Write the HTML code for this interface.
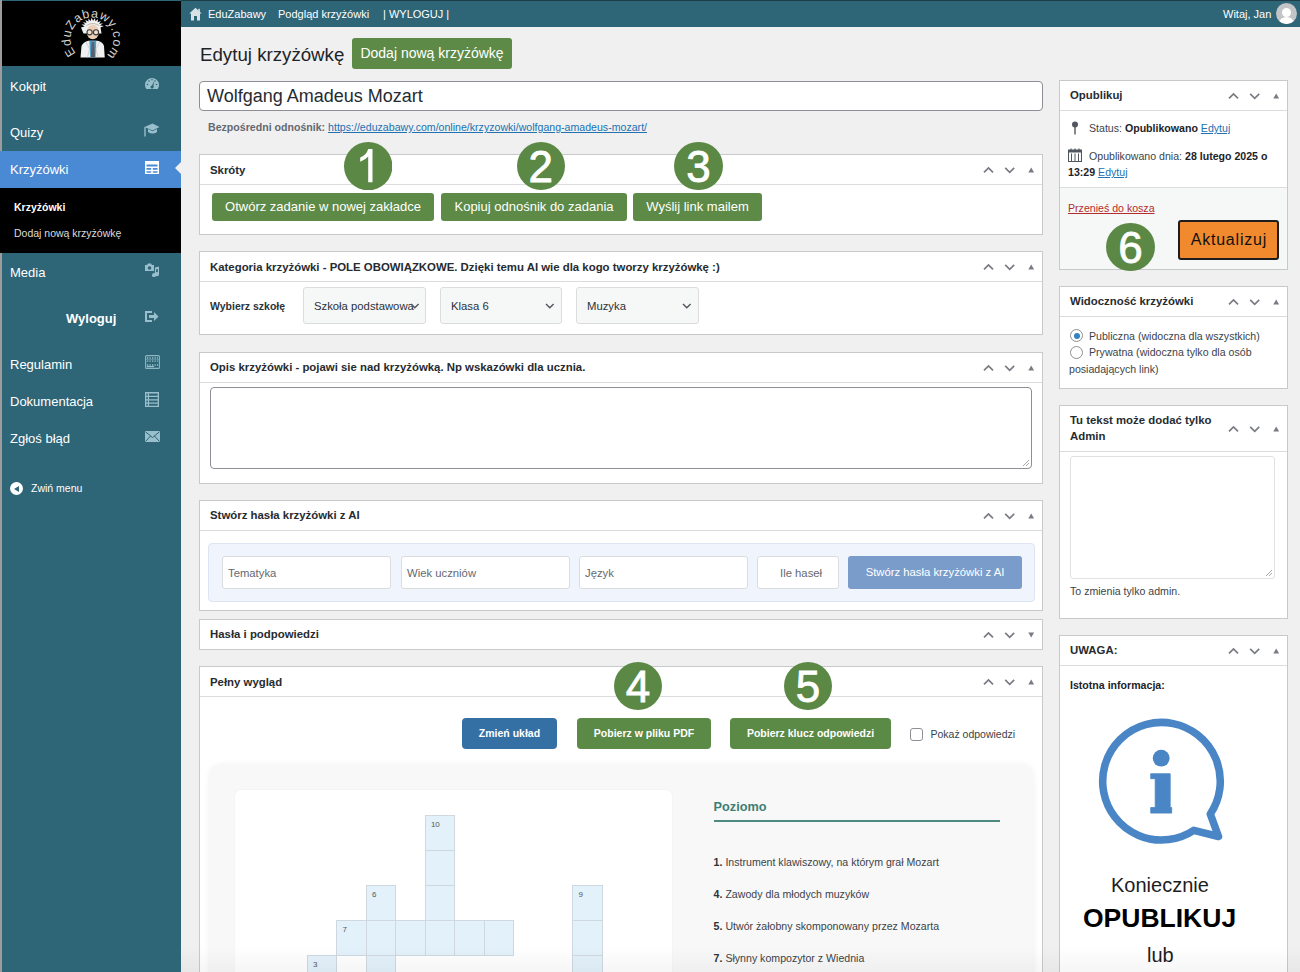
<!DOCTYPE html>
<html><head><meta charset="utf-8">
<style>
*{box-sizing:border-box;margin:0;padding:0}
html,body{width:1300px;height:972px;overflow:hidden;background:#f0f0f1;font-family:"Liberation Sans",sans-serif;color:#1d2327}
.a{position:absolute}
.t{position:absolute;white-space:nowrap;line-height:1}
#side{left:0;top:0;width:181px;height:972px;background:#2e6577}
#logo{left:2px;top:1px;width:179px;height:65px;background:#000}
.mi{position:absolute;left:10px;font-size:13px;color:#fff;white-space:nowrap;line-height:1}
.ic{position:absolute;left:144px}
#top{left:181px;top:0;width:1119px;height:27px;background:#2e6577;border-top:1px solid #1c3c46}
.tb{position:absolute;top:9px;font-size:11px;color:#fff;white-space:nowrap;line-height:1}
.box{position:absolute;background:#fff;border:1px solid #c8c9cb}
.bh{position:absolute;left:0;right:0;top:0;border-bottom:1px solid #dcdcde}
.bt{position:absolute;left:10px;font-size:11.4px;font-weight:bold;color:#262b30;white-space:nowrap;line-height:1}
.arr{position:absolute;width:60px;height:14px}
.gbtn{position:absolute;background:#5e8a47;border-radius:3px;color:#fff;font-size:13px;text-align:center;white-space:nowrap}
.circ{position:absolute;border-radius:50%;background:#5b8945;color:#fff;text-align:center;-webkit-text-stroke:0.8px #fff}
.sel{position:absolute;background:#f6f7f7;border:1px solid #dcdcde;border-radius:3px;font-size:11.5px;color:#2c3338;line-height:1}
.inp{position:absolute;background:#fff;border:1px solid #dcdcde;border-radius:3px;font-size:11px;color:#646970;line-height:1}
.cell{position:absolute;width:30px;height:36px;background:#e3f1fb;border:1px solid #cfd8de}
.cn{position:absolute;left:5px;top:5px;font-size:8px;color:#555;line-height:1}
.clue{position:absolute;left:713.6px;font-size:10.6px;color:#3c434a;white-space:nowrap;line-height:1}
.clue b{color:#2c3338}
</style></head><body>

<!-- SIDEBAR -->
<div id="side" class="a"></div>
<div class="a" style="left:0;top:0;width:2px;height:972px;background:#9c9c9c"></div>
<div id="logo" class="a"></div>
<div class="a" style="left:0;top:151px;width:181px;height:38px;background:#4a89d4"></div>
<div class="a" style="left:0;top:188px;width:181px;height:65px;background:#000"></div>
<div class="a" style="left:175px;top:161px;width:0;height:0;border-top:7px solid transparent;border-bottom:7px solid transparent;border-right:7px solid #f0f0f1"></div>

<div class="mi" style="top:80px">Kokpit</div>
<div class="mi" style="top:126px">Quizy</div>
<div class="mi" style="top:163px">Krzyżówki</div>
<div class="mi" style="left:14px;top:202px;font-size:10.5px;font-weight:bold">Krzyżówki</div>
<div class="mi" style="left:14px;top:228px;font-size:10.5px;color:#ddd">Dodaj nową krzyżówkę</div>
<div class="mi" style="top:266px">Media</div>
<div class="mi" style="left:66px;top:312px;font-weight:bold">Wyloguj</div>
<div class="mi" style="top:358px">Regulamin</div>
<div class="mi" style="top:395px">Dokumentacja</div>
<div class="mi" style="top:432px">Zgłoś błąd</div>
<div class="a" style="left:10px;top:482px;width:13px;height:13px;border-radius:50%;background:#fff"></div>
<div class="a" style="left:13px;top:485px;width:0;height:0;border-top:3.5px solid transparent;border-bottom:3.5px solid transparent;border-right:5px solid #2e6577;margin-left:1px;margin-top:0.5px"></div>
<div class="mi" style="left:31px;top:483px;font-size:10.5px">Zwiń menu</div>

<!-- TOPBAR -->
<div id="top" class="a"></div>
<div class="tb" style="left:208px">EduZabawy</div>
<div class="tb" style="left:278px">Podgląd krzyżówki</div>
<div class="tb" style="left:383px">| WYLOGUJ |</div>
<div class="tb" style="left:1223px">Witaj, Jan</div>
<div class="a" style="left:1276px;top:3px;width:21px;height:21px;border-radius:50%;background:#c3c4c7;overflow:hidden">
  <div class="a" style="left:6px;top:5px;width:9px;height:9px;border-radius:50%;background:#fff"></div>
  <div class="a" style="left:3px;top:14px;width:15px;height:12px;border-radius:50%;background:#fff"></div>
</div>

<!-- HEADING -->
<div class="t" style="left:200px;top:46px;font-size:18.7px;color:#1d2327">Edytuj krzyżówkę</div>
<div class="gbtn" style="left:352px;top:38px;width:160px;height:31px;line-height:31px;font-size:14px">Dodaj nową krzyżówkę</div>

<div class="a" style="left:199px;top:81px;width:844px;height:30px;background:#fff;border:1px solid #8c8f94;border-radius:4px"></div>
<div class="t" style="left:207px;top:87px;font-size:18px;color:#262b30">Wolfgang Amadeus Mozart</div>
<div class="t" style="left:208px;top:122px;font-size:10.6px;font-weight:bold;color:#646970">Bezpośredni odnośnik: <span style="font-weight:normal;color:#2271b1;text-decoration:underline">https://eduzabawy.com/online/krzyzowki/wolfgang-amadeus-mozart/</span></div>


<!-- ARROWS template: up, down, triangle -->
<!-- SKROTY -->
<div class="box" style="left:199px;top:154px;width:844px;height:81px">
  <div class="bh" style="height:30px"></div>
  <div class="bt" style="top:10px">Skróty</div>
</div>
<div class="gbtn" style="left:212px;top:193px;width:222px;height:28px;line-height:28px">Otwórz zadanie w nowej zakładce</div>
<div class="gbtn" style="left:441px;top:193px;width:186px;height:28px;line-height:28px">Kopiuj odnośnik do zadania</div>
<div class="gbtn" style="left:633px;top:193px;width:129px;height:28px;line-height:28px">Wyślij link mailem</div>

<!-- KATEGORIA -->
<div class="box" style="left:199px;top:251px;width:844px;height:84px">
  <div class="bh" style="height:30px"></div>
  <div class="bt" style="top:10px">Kategoria krzyżówki - POLE OBOWIĄZKOWE. Dzięki temu AI wie dla kogo tworzy krzyżówkę :)</div>
  <div class="t" style="left:10px;top:49px;font-size:10.5px;font-weight:bold;color:#2c3338">Wybierz szkołę</div>
</div>
<div class="sel" style="left:303px;top:287px;width:123px;height:37px"><span class="t" style="left:10px;top:13px;font-size:11.3px">Szkoła podstawowa</span></div>
<div class="sel" style="left:440px;top:287px;width:122px;height:37px"><span class="t" style="left:10px;top:13px;font-size:11.3px">Klasa 6</span></div>
<div class="sel" style="left:576px;top:287px;width:123px;height:37px"><span class="t" style="left:10px;top:13px;font-size:11.3px">Muzyka</span></div>

<!-- OPIS -->
<div class="box" style="left:199px;top:352px;width:844px;height:132px">
  <div class="bh" style="height:30px"></div>
  <div class="bt" style="top:9px">Opis krzyżówki - pojawi sie nad krzyżówką. Np wskazówki dla ucznia.</div>
</div>
<div class="a" style="left:210px;top:387px;width:822px;height:82px;border:1px solid #8c8f94;border-radius:4px;background:#fff"></div>

<!-- STWORZ -->
<div class="box" style="left:199px;top:500px;width:844px;height:111px">
  <div class="bh" style="height:30px"></div>
  <div class="bt" style="top:9px">Stwórz hasła krzyżówki z AI</div>
</div>
<div class="a" style="left:208px;top:543px;width:827px;height:59px;background:#f0f4fd;border:1px solid #dde4f2;border-radius:4px"></div>
<div class="inp" style="left:222px;top:556px;width:169px;height:33px"><span class="t" style="left:5px;top:11px;font-size:11.3px">Tematyka</span></div>
<div class="inp" style="left:401px;top:556px;width:169px;height:33px"><span class="t" style="left:5px;top:11px;font-size:11.3px">Wiek uczniów</span></div>
<div class="inp" style="left:579px;top:556px;width:169px;height:33px"><span class="t" style="left:5px;top:11px;font-size:11.3px">Język</span></div>
<div class="inp" style="left:757px;top:556px;width:82px;height:33px"><span class="t" style="left:22px;top:11px;font-size:11.3px">Ile haseł</span></div>
<div class="a" style="left:848px;top:556px;width:174px;height:33px;background:#7a9ccb;border-radius:3px;color:#fff;font-size:11.3px;text-align:center;line-height:33px">Stwórz hasła krzyżówki z AI</div>

<!-- HASLA -->
<div class="box" style="left:199px;top:619px;width:844px;height:31px">
  <div class="bt" style="top:9px">Hasła i podpowiedzi</div>
</div>

<!-- PELNY -->
<div class="box" style="left:199px;top:666px;width:844px;height:320px">
  <div class="bh" style="height:30px"></div>
  <div class="bt" style="top:10px">Pełny wygląd</div>
</div>
<div class="a" style="left:462px;top:718px;width:95px;height:31px;background:#3570a5;border-radius:4px;color:#fff;font-size:10.5px;font-weight:bold;text-align:center;line-height:31px">Zmień układ</div>
<div class="a" style="left:577px;top:718px;width:134px;height:31px;background:#5b8a46;border-radius:4px;color:#fff;font-size:10.5px;font-weight:bold;text-align:center;line-height:31px">Pobierz w pliku PDF</div>
<div class="a" style="left:730px;top:718px;width:161px;height:31px;background:#5b8a46;border-radius:4px;color:#fff;font-size:10.5px;font-weight:bold;text-align:center;line-height:31px">Pobierz klucz odpowiedzi</div>
<div class="a" style="left:910px;top:728px;width:13px;height:13px;border:1px solid #8c8f94;border-radius:3px;background:#fff"></div>
<div class="t" style="left:930.5px;top:729px;font-size:10.5px;color:#3c434a">Pokaż odpowiedzi</div>

<div class="a" style="left:210px;top:764px;width:823px;height:222px;background:#f8f8f8;border-radius:12px;box-shadow:0 1px 7px rgba(0,0,0,0.07)"></div>
<div class="a" style="left:235px;top:790px;width:437px;height:200px;background:#fff;border-radius:6px;box-shadow:0 0 2px rgba(0,0,0,0.05)"></div>


<!-- RIGHT SIDEBAR -->
<div class="box" style="left:1059px;top:80px;width:229px;height:190px">
  <div class="bh" style="height:30px"></div>
  <div class="bt" style="top:9px">Opublikuj</div>
  <div class="a" style="left:0;top:106px;width:227px;height:82px;background:#f6f7f7;border-top:1px solid #dcdcde"></div>
</div>
<div class="t" style="left:1089px;top:123px;font-size:10.6px;color:#3c434a">Status: <b style="color:#1d2327">Opublikowano</b> <span style="color:#2271b1;text-decoration:underline">Edytuj</span></div>
<div class="t" style="left:1089px;top:151px;font-size:10.6px;color:#3c434a">Opublikowano dnia: <b style="color:#1d2327">28 lutego 2025 o</b></div>
<div class="t" style="left:1068px;top:167px;font-size:10.6px;color:#3c434a"><b style="color:#1d2327">13:29</b> <span style="color:#2271b1;text-decoration:underline">Edytuj</span></div>
<div class="t" style="left:1068px;top:203px;font-size:10.6px;color:#b32d2e;text-decoration:underline">Przenieś do kosza</div>
<div class="a" style="left:1178px;top:220px;width:101px;height:40px;background:#f18a2f;border:2px solid #1d1d1d;border-radius:3px;color:#111;font-size:16px;letter-spacing:0.8px;text-indent:0.8px;text-align:center;line-height:36px">Aktualizuj</div>

<div class="box" style="left:1059px;top:286px;width:229px;height:103px">
  <div class="bh" style="height:30px"></div>
  <div class="bt" style="top:9px">Widoczność krzyżówki</div>
</div>
<div class="a" style="left:1070px;top:329px;width:13px;height:13px;border-radius:50%;border:1px solid #8c8f94;background:#fff"><div class="a" style="left:2.5px;top:2.5px;width:6px;height:6px;border-radius:50%;background:#3582c4"></div></div>
<div class="a" style="left:1070px;top:346px;width:13px;height:13px;border-radius:50%;border:1px solid #8c8f94;background:#fff"></div>
<div class="t" style="left:1089px;top:331px;font-size:10.6px;color:#3c434a">Publiczna (widoczna dla wszystkich)</div>
<div class="t" style="left:1089px;top:347px;font-size:10.6px;color:#3c434a">Prywatna (widoczna tylko dla osób</div>
<div class="t" style="left:1069px;top:364px;font-size:10.6px;color:#3c434a">posiadających link)</div>

<div class="box" style="left:1059px;top:405px;width:229px;height:214px">
  <div class="bh" style="height:46px"></div>
  <div class="bt" style="top:9px">Tu tekst może dodać tylko</div>
  <div class="bt" style="top:25px">Admin</div>
</div>
<div class="a" style="left:1070px;top:456px;width:205px;height:123px;border:1px solid #e2e2e4;border-radius:3px;background:#fff"></div>
<div class="t" style="left:1070px;top:586px;font-size:10.6px;color:#3c434a">To zmienia tylko admin.</div>

<div class="box" style="left:1059px;top:635px;width:229px;height:350px">
  <div class="bh" style="height:30px"></div>
  <div class="bt" style="top:9px">UWAGA:</div>
  <div class="t" style="left:10px;top:44px;font-size:10.6px;font-weight:bold;color:#1d2327">Istotna informacja:</div>
</div>
<div class="t" style="left:1111px;top:875px;font-size:20px;color:#1d1d1d">Koniecznie</div>
<div class="t" style="left:1083px;top:905px;font-size:26.5px;font-weight:bold;color:#000">OPUBLIKUJ</div>
<div class="t" style="left:1147px;top:945px;font-size:20px;color:#1d1d1d">lub</div>

<svg class="a" style="left:983px;top:165.7px" width="54" height="8" viewBox="0 0 54 8"><polyline points="1,6.3 5.5,1.9 10,6.3" fill="none" stroke="#787c82" stroke-width="1.7"/><polyline points="22.2,1.9 26.7,6.3 31.2,1.9" fill="none" stroke="#787c82" stroke-width="1.7"/><polygon points="45.3,6.5 48.2,1.6 51.1,6.5" fill="#787c82"/></svg>
<svg class="a" style="left:983px;top:262.7px" width="54" height="8" viewBox="0 0 54 8"><polyline points="1,6.3 5.5,1.9 10,6.3" fill="none" stroke="#787c82" stroke-width="1.7"/><polyline points="22.2,1.9 26.7,6.3 31.2,1.9" fill="none" stroke="#787c82" stroke-width="1.7"/><polygon points="45.3,6.5 48.2,1.6 51.1,6.5" fill="#787c82"/></svg>
<svg class="a" style="left:983px;top:363.7px" width="54" height="8" viewBox="0 0 54 8"><polyline points="1,6.3 5.5,1.9 10,6.3" fill="none" stroke="#787c82" stroke-width="1.7"/><polyline points="22.2,1.9 26.7,6.3 31.2,1.9" fill="none" stroke="#787c82" stroke-width="1.7"/><polygon points="45.3,6.5 48.2,1.6 51.1,6.5" fill="#787c82"/></svg>
<svg class="a" style="left:983px;top:511.7px" width="54" height="8" viewBox="0 0 54 8"><polyline points="1,6.3 5.5,1.9 10,6.3" fill="none" stroke="#787c82" stroke-width="1.7"/><polyline points="22.2,1.9 26.7,6.3 31.2,1.9" fill="none" stroke="#787c82" stroke-width="1.7"/><polygon points="45.3,6.5 48.2,1.6 51.1,6.5" fill="#787c82"/></svg>
<svg class="a" style="left:983px;top:630.7px" width="54" height="8" viewBox="0 0 54 8"><polyline points="1,6.3 5.5,1.9 10,6.3" fill="none" stroke="#787c82" stroke-width="1.7"/><polyline points="22.2,1.9 26.7,6.3 31.2,1.9" fill="none" stroke="#787c82" stroke-width="1.7"/><polygon points="45.3,1.6 48.2,6.5 51.1,1.6" fill="#787c82"/></svg>
<svg class="a" style="left:983px;top:677.7px" width="54" height="8" viewBox="0 0 54 8"><polyline points="1,6.3 5.5,1.9 10,6.3" fill="none" stroke="#787c82" stroke-width="1.7"/><polyline points="22.2,1.9 26.7,6.3 31.2,1.9" fill="none" stroke="#787c82" stroke-width="1.7"/><polygon points="45.3,6.5 48.2,1.6 51.1,6.5" fill="#787c82"/></svg>
<svg class="a" style="left:1228px;top:91.7px" width="54" height="8" viewBox="0 0 54 8"><polyline points="1,6.3 5.5,1.9 10,6.3" fill="none" stroke="#787c82" stroke-width="1.7"/><polyline points="22.2,1.9 26.7,6.3 31.2,1.9" fill="none" stroke="#787c82" stroke-width="1.7"/><polygon points="45.3,6.5 48.2,1.6 51.1,6.5" fill="#787c82"/></svg>
<svg class="a" style="left:1228px;top:297.7px" width="54" height="8" viewBox="0 0 54 8"><polyline points="1,6.3 5.5,1.9 10,6.3" fill="none" stroke="#787c82" stroke-width="1.7"/><polyline points="22.2,1.9 26.7,6.3 31.2,1.9" fill="none" stroke="#787c82" stroke-width="1.7"/><polygon points="45.3,6.5 48.2,1.6 51.1,6.5" fill="#787c82"/></svg>
<svg class="a" style="left:1228px;top:424.7px" width="54" height="8" viewBox="0 0 54 8"><polyline points="1,6.3 5.5,1.9 10,6.3" fill="none" stroke="#787c82" stroke-width="1.7"/><polyline points="22.2,1.9 26.7,6.3 31.2,1.9" fill="none" stroke="#787c82" stroke-width="1.7"/><polygon points="45.3,6.5 48.2,1.6 51.1,6.5" fill="#787c82"/></svg>
<svg class="a" style="left:1228px;top:646.7px" width="54" height="8" viewBox="0 0 54 8"><polyline points="1,6.3 5.5,1.9 10,6.3" fill="none" stroke="#787c82" stroke-width="1.7"/><polyline points="22.2,1.9 26.7,6.3 31.2,1.9" fill="none" stroke="#787c82" stroke-width="1.7"/><polygon points="45.3,6.5 48.2,1.6 51.1,6.5" fill="#787c82"/></svg>
<div class="cell" style="left:424.9px;top:814.6px;width:30.5px;height:36.2px"><span class="cn">10</span></div>
<div class="cell" style="left:424.9px;top:849.8px;width:30.5px;height:36.2px"></div>
<div class="cell" style="left:365.9px;top:885.0px;width:30.5px;height:36.2px"><span class="cn">6</span></div>
<div class="cell" style="left:424.9px;top:885.0px;width:30.5px;height:36.2px"></div>
<div class="cell" style="left:572.4px;top:885.0px;width:30.5px;height:36.2px"><span class="cn">9</span></div>
<div class="cell" style="left:336.4px;top:920.2px;width:30.5px;height:36.2px"><span class="cn">7</span></div>
<div class="cell" style="left:365.9px;top:920.2px;width:30.5px;height:36.2px"></div>
<div class="cell" style="left:395.4px;top:920.2px;width:30.5px;height:36.2px"></div>
<div class="cell" style="left:424.9px;top:920.2px;width:30.5px;height:36.2px"></div>
<div class="cell" style="left:454.4px;top:920.2px;width:30.5px;height:36.2px"></div>
<div class="cell" style="left:483.9px;top:920.2px;width:30.5px;height:36.2px"></div>
<div class="cell" style="left:572.4px;top:920.2px;width:30.5px;height:36.2px"></div>
<div class="cell" style="left:306.9px;top:955.4px;width:30.5px;height:36.2px"><span class="cn">3</span></div>
<div class="cell" style="left:365.9px;top:955.4px;width:30.5px;height:36.2px"></div>
<div class="cell" style="left:572.4px;top:955.4px;width:30.5px;height:36.2px"></div>

<div class="t" style="left:713.6px;top:801px;font-size:12.7px;font-weight:bold;color:#3d7f73">Poziomo</div>
<div class="a" style="left:713.6px;top:820px;width:286px;height:2px;background:#4f8a80"></div>
<div class="clue" style="top:856.6px"><b>1.</b> Instrument klawiszowy, na którym grał Mozart</div>
<div class="clue" style="top:888.8px"><b>4.</b> Zawody dla młodych muzyków</div>
<div class="clue" style="top:921px"><b>5.</b> Utwór żałobny skomponowany przez Mozarta</div>
<div class="clue" style="top:953px"><b>7.</b> Słynny kompozytor z Wiednia</div>

<svg class="a" style="left:343.8px;top:141.8px" width="48.4" height="48.4" viewBox="0 0 48.4 48.4"><circle cx="24.2" cy="24.2" r="24.2" fill="#5b8945"/><path d="M24.2 7.1 H28.5 V40.2 H24.2 V14.6 Q21.5 18 16.2 19.7 V15.6 Q22.5 13.2 24.2 7.1Z" fill="#fff"/></svg>
<div class="circ" style="left:516.5999999999999px;top:141.60000000000002px;width:48.4px;height:48.4px;line-height:50px;font-size:44px">2</div>
<div class="circ" style="left:674.4px;top:141.60000000000002px;width:48.4px;height:48.4px;line-height:50px;font-size:44px">3</div>
<div class="circ" style="left:613.8px;top:661.5999999999999px;width:48.4px;height:48.4px;line-height:50px;font-size:44px">4</div>
<div class="circ" style="left:783.9px;top:661.5999999999999px;width:48.4px;height:48.4px;line-height:50px;font-size:44px">5</div>
<div class="circ" style="left:1106.2px;top:222.8px;width:48.4px;height:48.4px;line-height:50px;font-size:44px">6</div>

<!-- LOGO -->
<svg class="a" style="left:50px;top:0" width="90" height="65" viewBox="50 0 90 65">
  <defs><path id="arc" d="M 76.02 53.4 A 21.5 21.5 0 1 1 93.87 60.4"/></defs>
  <text font-family="Liberation Sans" font-size="12.5" fill="#d4d4d4"><textPath href="#arc" textLength="101" lengthAdjust="spacing">EduZabawy.com</textPath></text>
  <polygon points="81.0,27.5 84.6,26.5 81.5,24.6 85.3,24.5 83.0,22.0 86.6,22.9 85.3,19.9 88.5,21.6 88.3,18.4 90.7,20.9 91.6,17.8 93.1,20.7 95.1,18.0 95.4,21.2 98.2,19.0 97.5,22.2 100.9,20.9 99.1,23.7 102.9,23.3 100.1,25.5 103.9,26.0 100.5,27.5 101.5,33.5 83.5,33.5" fill="#f0f0f0"/>
  <ellipse cx="92.8" cy="32" rx="6" ry="7.3" fill="#eccfb6"/>
  <path d="M86.5 25.5 Q92.8 21.5 99 25.5" fill="none" stroke="#b8a89a" stroke-width="0.8"/>
  <circle cx="89.6" cy="32.3" r="2.6" fill="#f2dfcf" stroke="#3a3a3a" stroke-width="1.1"/>
  <circle cx="96" cy="32.3" r="2.6" fill="#f2dfcf" stroke="#3a3a3a" stroke-width="1.1"/>
  <path d="M80.5 57.5 L81.5 46 Q83 42 88.5 40.8 L97.5 40.8 Q103 42 104 46 L104.7 57.5Z" fill="#f1f1f1"/>
  <path d="M89.3 40.8 L96.3 40.8 L95.5 57.5 L90.3 57.5Z" fill="#4e9cc9"/>
  <path d="M91.6 42 L94.2 42 L95 57.5 L90.8 57.5Z" fill="#5b5f68"/>
  <path d="M86 42 L89.5 49 L87.5 57.5 M99.5 42 L96 49 L98 57.5" fill="none" stroke="#bdbdbd" stroke-width="0.6"/>
</svg>

<!-- SIDEBAR ICONS -->
<svg class="a" style="left:144px;top:77px" width="16" height="13" viewBox="0 0 16 13"><path d="M2.3 12 A7 7 0 1 1 13.7 12 Z" fill="#98bfcb"/><path d="M7 10.5 L10.2 4 L9.2 11Z" fill="#2e6577"/><circle cx="8" cy="10" r="1.5" fill="#2e6577"/><circle cx="3.5" cy="7.5" r="0.8" fill="#2e6577"/><circle cx="5" cy="4" r="0.8" fill="#2e6577"/><circle cx="8" cy="2.7" r="0.8" fill="#2e6577"/><circle cx="11" cy="4" r="0.8" fill="#2e6577"/><circle cx="12.5" cy="7.5" r="0.8" fill="#2e6577"/></svg>
<svg class="a" style="left:144px;top:122px" width="16" height="15" viewBox="0 0 16 15"><path d="M0.5 5 L8.5 1.5 L15.5 5 L8.5 8.5Z" fill="#98bfcb"/><path d="M4 7 L4 10 Q8.5 13 13 10 L13 7 L8.5 9.2Z" fill="#98bfcb"/><rect x="0.3" y="5" width="1.4" height="9.5" fill="#98bfcb"/></svg>
<svg class="a" style="left:145px;top:161px" width="14" height="13" viewBox="0 0 14 13"><path d="M0 0 H14 V13 H0Z M1.5 3.5 V5.5 H12.5 V3.5Z M1.5 7 V8.8 H6.2 V7Z M7.8 7 V8.8 H12.5 V7Z M1.5 10.2 V11.7 H6.2 V10.2Z M7.8 10.2 V11.7 H12.5 V10.2Z" fill="#fff" fill-rule="evenodd"/></svg>
<svg class="a" style="left:144px;top:262px" width="16" height="15" viewBox="0 0 16 15"><path d="M1 3 H3 L4 1.5 H7 L8 3 H10 V9 H1Z" fill="#98bfcb"/><circle cx="5.5" cy="6" r="1.8" fill="#2e6577"/><path d="M11 5.5 L15 4.5 L15 12 A2 2 0 1 1 13.8 10.3 L13.8 7 L12 7.5 L12 13 A2 2 0 1 1 10.8 11.3Z" fill="#98bfcb"/></svg>
<svg class="a" style="left:145px;top:311px" width="14" height="11" viewBox="0 0 14 11"><path d="M0 0 H7 V2 H2 V9 H7 V11 H0Z" fill="#98bfcb"/><path d="M4 4 H9 V1 L13.5 5.5 L9 10 V7 H4Z" fill="#98bfcb"/></svg>
<svg class="a" style="left:144.5px;top:355px" width="15" height="14" viewBox="0 0 15 14"><rect x="0.6" y="0.6" width="13.8" height="12.8" rx="1" fill="none" stroke="#98bfcb" stroke-width="1.1" opacity="0.9"/><path d="M2 3 H13 M2 6.2 H13 M2 10 H13" stroke="#98bfcb" stroke-width="1.3" stroke-dasharray="1.3 1.2"/><rect x="0.6" y="4.3" width="13.8" height="0.8" fill="#98bfcb" opacity="0.6"/><rect x="2" y="11" width="7" height="1.2" fill="#98bfcb"/></svg>
<svg class="a" style="left:145px;top:392px" width="14" height="15" viewBox="0 0 14 15"><path d="M0 0 H14 V15 H0Z M1.3 1.5 V3.8 H2.8 V1.5Z M4 1.5 V3.8 H12.7 V1.5Z M1.3 5 V7.2 H2.8 V5Z M4 5 V7.2 H12.7 V5Z M1.3 8.4 V10.6 H2.8 V8.4Z M4 8.4 V10.6 H12.7 V8.4Z M1.3 11.8 V13.7 H2.8 V11.8Z M4 11.8 V13.7 H12.7 V11.8Z" fill="#98bfcb" fill-rule="evenodd"/></svg>
<svg class="a" style="left:145px;top:431px" width="15" height="11" viewBox="0 0 15 11"><rect x="0" y="0" width="15" height="11" fill="#98bfcb"/><path d="M0.5 0.8 L7.5 6.5 L14.5 0.8 M0.5 10.5 L5.5 5 M14.5 10.5 L9.5 5" fill="none" stroke="#2e6577" stroke-width="1"/></svg>

<!-- HOME ICON -->
<svg class="a" style="left:189px;top:7px" width="13" height="14" viewBox="0 0 13 14"><path d="M6.5 0.8 L0.3 6.6 L2 6.6 L2 13.5 L11 13.5 L11 6.6 L12.7 6.6Z M5 9 V13.5 H8 V9Z" fill="#d6e2e6" fill-rule="evenodd"/><rect x="9.3" y="1.8" width="1.6" height="3.5" fill="#d6e2e6"/></svg>

<!-- SELECT CHEVRONS -->
<svg class="a" style="left:410px;top:302px" width="10" height="8" viewBox="0 0 10 8"><polyline points="1,2 4.8,5.8 8.6,2" fill="none" stroke="#50575e" stroke-width="1.4"/></svg>
<svg class="a" style="left:545px;top:302px" width="10" height="8" viewBox="0 0 10 8"><polyline points="1,2 4.8,5.8 8.6,2" fill="none" stroke="#50575e" stroke-width="1.4"/></svg>
<svg class="a" style="left:682px;top:302px" width="10" height="8" viewBox="0 0 10 8"><polyline points="1,2 4.8,5.8 8.6,2" fill="none" stroke="#50575e" stroke-width="1.4"/></svg>

<!-- TEXTAREA HANDLES -->
<svg class="a" style="left:1022px;top:459px" width="8" height="8" viewBox="0 0 8 8"><path d="M7 1 L1 7 M7 4 L4 7" stroke="#8c8f94" stroke-width="0.8"/></svg>
<svg class="a" style="left:1265px;top:569px" width="8" height="8" viewBox="0 0 8 8"><path d="M7 1 L1 7 M7 4 L4 7" stroke="#8c8f94" stroke-width="0.8"/></svg>

<!-- PIN + CALENDAR -->
<svg class="a" style="left:1071px;top:121px" width="8" height="14" viewBox="0 0 8 14"><circle cx="4" cy="3.5" r="3" fill="#50575e"/><rect x="3.3" y="5" width="1.4" height="8.5" fill="#50575e"/></svg>
<svg class="a" style="left:1068px;top:148px" width="14" height="14" viewBox="0 0 14 14"><path d="M0.5 2 H13.5 V13.5 H0.5Z" fill="none" stroke="#50575e" stroke-width="1.1"/><rect x="0.5" y="2" width="13" height="2.5" fill="#50575e"/><path d="M3 0.5 V3 M7 0.5 V3 M11 0.5 V3" stroke="#50575e" stroke-width="1.2"/><path d="M3.5 5.5 V13 M7 5.5 V13 M10.5 5.5 V13" stroke="#50575e" stroke-width="1"/></svg>

<!-- INFO ICON -->
<svg class="a" style="left:1095px;top:714px" width="140" height="140" viewBox="0 0 140 140">
  <path d="M98.8 116.35 A58.8 58.8 0 1 1 115.3 100 L123.5 122.5 Z" fill="none" stroke="#4a86c5" stroke-width="7.6" stroke-linejoin="round"/>
  <circle cx="66.2" cy="44.2" r="8.4" fill="#4a86c5"/>
  <path d="M55.7 59.7 H75.2 V93.5 H76.7 V99.1 H55.7 V93.5 H60.2 V64.7 H55.7Z" fill="#4a86c5" stroke="#4a86c5" stroke-width="0.8" stroke-linejoin="round"/>
</svg>

<!-- BOTTOM FADE -->
<div class="a" style="left:181px;top:945px;width:1119px;height:27px;background:linear-gradient(rgba(0,0,0,0),rgba(0,0,0,0.035))"></div>

</body></html>
